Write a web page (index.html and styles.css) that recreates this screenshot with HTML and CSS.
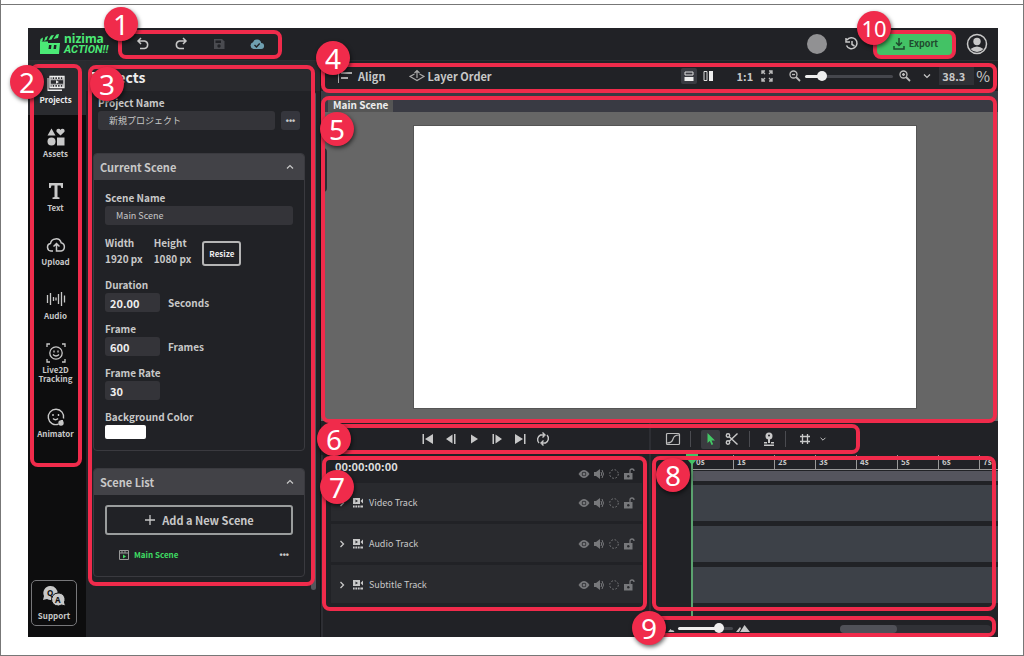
FILE: index.html
```html
<!DOCTYPE html>
<html lang="en">
<head>
    <meta charset="utf-8">
    <title>nizima ACTION!! - Screen Guide</title>
    <link rel="stylesheet" href="styles.css">
</head>
<body>
    <!-- shared icons -->
    <svg class="sprite" width="0" height="0">
        <symbol id="eye" viewBox="0 0 12 12"><path d="M.5 6q5.500-8 11 0q-5.500 8-11 0z" fill="currentColor"/><circle cx="6" cy="6" r="2.300" fill="#292a2e"/><circle cx="6" cy="6" r="1.500" fill="currentColor"/></symbol>
        <symbol id="speaker" viewBox="0 0 12 12"><path d="M1 4h2l4-3v10l-4-3H1z" fill="currentColor"/><path d="M8 4q1.500 2 0 4M9 2q3 4 0 8" fill="none" stroke="currentColor"/></symbol>
        <symbol id="ring" viewBox="0 0 12 12"><circle cx="6" cy="6" r="4.300" fill="none" stroke="currentColor" stroke-dasharray="1.7 1.700"/></symbol>
        <symbol id="lock" viewBox="0 0 12 12"><path d="M1 5h8.500v6.500H1z" fill="currentColor"/><path d="M7 5V3q0-2 2-2t2 2" fill="none" stroke="currentColor" stroke-width="1.300"/><circle cx="5.300" cy="8.300" r="1.200" fill="#292a2e"/></symbol>
        <symbol id="film" viewBox="0 0 12 12"><path d="M1 1h7v6H1z" fill="currentColor"/><path d="M3.500 2.500v3L6 4z" fill="#292a2e"/><path d="M8.500 4l2.500-2.500v5zM1 8.500h10v2H1z" fill="currentColor"/><path d="M3 8v3M5.500 8v3M8 8v3" stroke="#292a2e" stroke-width=".7"/></symbol>
        <symbol id="up" viewBox="0 0 10 10"><path d="M2 6.500l3-3 3 3" fill="none" stroke="currentColor" stroke-width="1.200"/></symbol>
        <symbol id="down" viewBox="0 0 10 10"><path d="M2 3.500l3 3 3-3" fill="none" stroke="currentColor" stroke-width="1.200"/></symbol>
        <symbol id="right" viewBox="0 0 10 10"><path d="M3.500 2l3 3-3 3" fill="none" stroke="currentColor" stroke-width="1.300"/></symbol>
    </svg>

    <div class="sheet">
    <div class="app">
        <header class="topbar">
            <a href="#" class="logo">
                <svg width="22" height="22" viewBox="0 0 22 22" fill="#4bea76"><path d="M1 10h20l-1 11H1z"/><path d="M1 9l.5-3L4 4.500 3.500 8zM5 8l1.500-4L9 3 7.500 7zM9.500 7L12 2.500l3-.5-2.500 4.500zM14.500 6l3-4.500L20 1l-1 4zM1 8.500h8V10H1z"/><path d="M10 12h2.500l-.5 4H9.500zM15 12h2.500l-.5 4H14.500z" fill="#212226"/></svg>
                <span class="logo-text"><b>nizima</b><i>ACTION!!</i></span>
            </a>
            <div class="history">
                <button aria-label="Undo"><svg width="16" height="16" viewBox="0 0 16 16" fill="none" stroke="#c8c8c8" stroke-width="1.500"><path d="M6 2L3 5l3 3M3 5h6.500a3.800 3.800 0 0 1 0 7.500H5"/></svg></button>
                <button aria-label="Redo"><svg width="16" height="16" viewBox="0 0 16 16" fill="none" stroke="#c8c8c8" stroke-width="1.500"><path d="M10 2l3 3-3 3M13 5H6.500a3.800 3.800 0 0 0 0 7.500H11"/></svg></button>
                <button aria-label="Save" disabled><svg width="16" height="16" viewBox="0 0 16 16"><path d="M3 3h8l2.500 2.500V13H3z" fill="#4a4b50"/><path d="M4.500 4.500H10V7H4.500z" fill="#212226"/><circle cx="8" cy="10" r="1.700" fill="#212226"/></svg></button>
                <button aria-label="Cloud saved"><svg width="16" height="16" viewBox="0 0 16 16"><path d="M4.500 13a3.500 3.500 0 0 1-.5-6.800 4.300 4.300 0 0 1 8.200.8A3 3 0 0 1 12 13z" fill="#6f9fb0"/><path d="M5.500 9l2 2 3.200-3.500" fill="none" stroke="#212226" stroke-width="1.400"/></svg></button>
                <div class="box box-1"><span class="num">1</span></div>
            </div>
            <div class="account">
                <span class="status-dot"></span>
                <button class="versions" aria-label="Version history"><svg width="16" height="16" viewBox="0 0 16 16" fill="none" stroke="#c8c8c8" stroke-width="1.500"><path d="M3 4a5.500 5.500 0 1 1-.5 5.500M2 2v4h4M8 5v3.500l2.500 1.500"/></svg></button>
                <div class="export-wrap">
                    <button class="export"><svg width="12" height="12" viewBox="0 0 12 12" fill="none" stroke="#1f4a2e" stroke-width="1.500"><path d="M6 0v7M3 4.500l3 3 3-3M1 8v3h10V8"/></svg>Export</button>
                    <div class="box box-10"><span class="num small">10</span></div>
                </div>
                <button aria-label="Account"><svg width="22" height="22" viewBox="0 0 22 22"><circle cx="11" cy="11" r="9.500" fill="none" stroke="#c8c8c8" stroke-width="1.500"/><circle cx="11" cy="8.500" r="3.700" fill="#c8c8c8"/><path d="M4.500 16q6.500-5 13 0a8.500 8.500 0 0 1-13 0z" fill="#c8c8c8"/></svg></button>
            </div>
        </header>

        <div class="body">
            <nav class="rail">
                <a href="#" class="tab active"><svg viewBox="0 0 20 20"><path d="M4 3.500h14v11H4z" fill="none" stroke="currentColor" stroke-width="1.300"/><path d="M4.500 6.700h13M4.500 11.300h13" stroke="currentColor" stroke-width=".8"/><path d="M5.500 5h12M5.500 13h12" stroke="currentColor" stroke-width="1.800" stroke-dasharray="1.200 1.500"/><path d="M10 7.300l3 1.700-3 1.700zM1.500 5h1v11.500H16V18H1.500z" fill="currentColor"/></svg>Projects</a>
                <a href="#" class="tab"><svg viewBox="0 0 20 20" fill="currentColor"><path d="M5.500 1.500l4 7h-8z"/><path d="M14.500 8.500l-4-3.700q-.5-3 2-3 1.500 0 2 1.200.5-1.200 2-1.200 2.500 0 2 3z"/><circle cx="5.500" cy="14.500" r="4"/><path d="M11 10.500h7.500v8H11z"/></svg>Assets</a>
                <a href="#" class="tab"><svg viewBox="0 0 20 20" fill="currentColor"><path d="M3 2h14v5h-1.700l-.8-2.500h-3v11.500l2 .6V18h-7v-1.400l2-.6V4.500h-3L4.700 7H3z"/></svg>Text</a>
                <a href="#" class="tab"><svg viewBox="0 0 20 20" fill="none" stroke="currentColor" stroke-width="1.500"><path d="M7 16H5a3.800 3.800 0 0 1-.5-7.500 5.500 5.500 0 0 1 10.700-.7A4.200 4.200 0 0 1 15 16h-4.500V9M7.500 11.500l3-3 3 3"/></svg>Upload</a>
                <a href="#" class="tab"><svg viewBox="0 0 20 20" fill="none" stroke="currentColor" stroke-width="1.300"><path d="M1.500 6v8M4.500 4v12M7.500 8v4M10 8.500v3M12.500 5v10M15.500 3v14M18.500 6.500v7"/></svg>Audio</a>
                <a href="#" class="tab tall"><svg viewBox="0 0 20 20" fill="none" stroke="currentColor" stroke-width="1.300"><circle cx="10" cy="10" r="6.200"/><path d="M1 4V1h3M16 1h3v3M19 16v3h-3M4 19H1v-3M7 11.500q3 3 6 0M8 7.500v2M12 7.500v2"/></svg>Live2D<br>Tracking</a>
                <a href="#" class="tab"><svg viewBox="0 0 20 20" fill="none" stroke="currentColor" stroke-width="1.400"><path d="M17.500 11.500a7.700 7.700 0 1 0-5 5.700M7 11.500q2.500 2.500 5 0M7 7v2M12.500 7v2"/><path d="M16 13v3" stroke-width="2"/><circle cx="15" cy="16" r="2" fill="currentColor"/></svg>Animator</a>
                <button class="support"><svg width="24" height="22" viewBox="0 0 24 22"><path d="M8 1a7 7 0 1 1-3 13l-4 1 1-4A7 7 0 0 1 8 1z" fill="#c8c8c8"/><path d="M16 8a6.500 6.500 0 0 1 6.500 9l1 4-4-1A6.500 6.500 0 1 1 16 8z" fill="#c8c8c8" stroke="#0d0d0e"/><text x="5" y="11" class="qa">Q</text><text x="13" y="18" class="qa">A</text></svg>Support</button>
                <div class="box box-2"><span class="num">2</span></div>
            </nav>

            <aside class="panel">
                <h1>Projects</h1>
                <div class="project">
                    <label for="projectName">Project Name</label>
                    <div class="project-row">
                        <input type="text" id="projectName" value="新規プロジェクト">
                        <button class="more" aria-label="Project menu">•••</button>
                    </div>
                </div>

                <section class="card scene">
                    <h2>Current Scene <svg width="10" height="10"><use href="#up"/></svg></h2>
                    <div class="card-body">
                        <label for="sceneName">Scene Name</label>
                        <input type="text" id="sceneName" value="Main Scene">
                        <div class="size">
                            <div>Width<br>1920 px</div>
                            <div>Height<br>1080 px</div>
                            <button class="resize">Resize</button>
                        </div>
                        <label for="duration">Duration</label>
                        <div class="value"><input type="text" id="duration" value="20.00"> Seconds</div>
                        <label for="frame">Frame</label>
                        <div class="value"><input type="text" id="frame" value="600"> Frames</div>
                        <label for="rate">Frame Rate</label>
                        <div class="value"><input type="text" id="rate" value="30"></div>
                        <label for="bgColor">Background Color</label>
                        <input type="color" id="bgColor" value="#ffffff">
                    </div>
                </section>

                <section class="card list">
                    <h2>Scene List <svg width="10" height="10"><use href="#up"/></svg></h2>
                    <div class="card-body">
                        <button class="add"><svg width="12" height="12" viewBox="0 0 12 12" stroke="#c8c8c8" stroke-width="1.300"><path d="M6 1v10M1 6h10"/></svg>Add a New Scene</button>
                        <div class="scene-item">
                            <svg width="10" height="10" viewBox="0 0 10 10"><path d="M.5.5h9v9h-9zM.5 3h9M3 .5V3M6 .5V3" fill="none" stroke="#999"/><path d="M4 4.500v4l3-2z" fill="#3fdc63"/></svg>
                            <a href="#">Main Scene</a>
                            <button aria-label="Scene menu">•••</button>
                        </div>
                    </div>
                </section>
                <div class="scrollbar"></div>
                <div class="box box-3"><span class="num">3</span></div>
            </aside>

            <main class="main">
                <div class="toolbar">
                    <button class="tool align"><svg width="16" height="14" viewBox="0 0 16 14" stroke="#aaa" fill="none"><path d="M1.500 0v14"/><path d="M4 4h11M4 9h7" stroke-width="2"/></svg>Align</button>
                    <button class="tool"><svg width="16" height="14" viewBox="0 0 16 14" stroke="#aaa" fill="none" stroke-width="1.200"><path d="M5.500 5L1 7.500 8 11.500l7-4L10.500 5M8 9V2M5.500 4L8 1.500 10.500 4"/></svg>Layer Order</button>
                    <div class="view">
                        <button class="split on" aria-label="Split rows"><svg width="10" height="10" viewBox="0 0 10 10"><path d="M1 1h8v3H1z" fill="none" stroke="#ddd"/><path d="M.5 6h9v4h-9z" fill="#eee"/></svg></button>
                        <button class="split" aria-label="Split columns"><svg width="10" height="10" viewBox="0 0 10 10"><path d="M1 .5h3v9H1z" fill="none" stroke="#ddd"/><path d="M6 0h4v10H6z" fill="#eee"/></svg></button>
                        <button class="ratio">1:1</button>
                        <button class="fit" aria-label="Fit"><svg width="12" height="12" viewBox="0 0 12 12" fill="none" stroke="#bbb" stroke-width="1.400"><path d="M1 4V1h3M8 1h3v3M11 8v3H8M4 11H1V8M1 1l3 3M11 1L8 4M11 11L8 8M1 11l3-3"/></svg></button>
                        <svg width="12" height="12" viewBox="0 0 12 12" fill="none" stroke="#bbb" stroke-width="1.300"><circle cx="4.500" cy="4.500" r="3.500"/><path d="M7 7l4 4" stroke-width="1.800"/><path d="M3 4.500h3"/></svg>
                        <input type="range" class="zoom" min="0" max="100" value="15" aria-label="Zoom">
                        <svg width="12" height="12" viewBox="0 0 12 12" fill="none" stroke="#bbb" stroke-width="1.300"><circle cx="4.500" cy="4.500" r="3.500"/><path d="M7 7l4 4" stroke-width="1.800"/><path d="M3 4.500h3M4.500 3v3"/></svg>
                        <button class="zoom-menu" aria-label="Zoom levels"><svg width="10" height="10"><use href="#down"/></svg></button>
                        <input type="text" class="percent" id="zoomValue" value="38.3">
                        <label for="zoomValue">%</label>
                    </div>
                    <div class="box box-4"><span class="num">4</span></div>
                </div>

                <div class="preview">
                    <div class="scene-tabs"><a href="#">Main Scene</a></div>
                    <div class="stage"><div class="canvas"></div></div>
                    <div class="handle"></div>
                    <div class="box box-5"><span class="num">5</span></div>
                </div>

                <div class="player">
                    <div class="transport">
                        <button aria-label="Go to start"><svg viewBox="0 0 14 14"><path d="M1.500 2H3v10H1.500zM12 2v10L4 7z"/></svg></button>
                        <button aria-label="Previous frame"><svg viewBox="0 0 14 14"><path d="M8.500 2.500v9L2 7zM10 2h1.500v10H10z"/></svg></button>
                        <button aria-label="Play"><svg viewBox="0 0 14 14"><path d="M4 2.500v9L11 7z"/></svg></button>
                        <button aria-label="Next frame"><svg viewBox="0 0 14 14"><path d="M2.500 2H4v10H2.500zM5.500 2.500v9L12 7z"/></svg></button>
                        <button aria-label="Go to end"><svg viewBox="0 0 14 14"><path d="M11 2h1.500v10H11zM2 2v10l8-5z"/></svg></button>
                        <button class="loop" aria-label="Loop"><svg viewBox="0 0 14 14"><path d="M3 11A5 5 0 0 1 4.500 3H8M6.500.5L9 3 6.500 5.500M11 3a5 5 0 0 1-1.500 8H6M7.500 8.500L5 11l2.500 2.500"/></svg></button>
                    </div>
                    <div class="edit">
                        <button aria-label="Graph editor"><svg width="16" height="14" viewBox="0 0 16 14" fill="none" stroke="#bbb" stroke-width="1.200"><rect x="1.500" y="1.500" width="13" height="11" rx="1"/><path d="M2 11q5 0 6-4t6-4"/></svg></button>
                        <span class="sep"></span>
                        <button class="on" aria-label="Select"><svg width="10" height="14" viewBox="0 0 10 14" fill="#43c765"><path d="M1.500 1v10l2.300-2 1.700 4 1.700-.8L5.500 8.500H9z"/></svg></button>
                        <button class="cut" aria-label="Cut"><svg width="14" height="14" viewBox="0 0 14 14" fill="none" stroke="#c8c8c8" stroke-width="1.400"><path d="M4 4.500l8.500 8M4 9.500l8.500-8"/><circle cx="3" cy="3.500" r="1.700"/><circle cx="3" cy="10.500" r="1.700"/></svg></button>
                        <span class="sep"></span>
                        <button aria-label="Marker"><svg width="12" height="14" viewBox="0 0 12 14" fill="#c8c8c8"><circle cx="6" cy="4" r="3.500"/><path d="M5 7h2v4H5zM1 10h3v1.500H1zM8 10h3v1.500H8zM1 12.500h10V14H1z"/><circle cx="6" cy="3.500" r="1" fill="#212226"/></svg></button>
                        <span class="sep"></span>
                        <button aria-label="Snap to grid"><svg width="12" height="12" viewBox="0 0 12 12" stroke="#c8c8c8" stroke-width="1.300"><path d="M3.500 1v10M8.500 1v10M1 3.500h10M1 8.500h10"/></svg></button>
                        <button class="grid-menu" aria-label="Grid options"><svg width="8" height="8" viewBox="0 0 10 10"><use href="#down"/></svg></button>
                    </div>
                    <div class="box box-6"><span class="num">6</span></div>
                </div>

                <div class="timeline">
                    <div class="tracks">
                        <div class="track-head">
                            <time>00:00:00:00</time>
                            <div class="flags"><svg><use href="#eye"/></svg><svg><use href="#speaker"/></svg><svg><use href="#ring"/></svg><svg><use href="#lock"/></svg></div>
                        </div>
                        <div class="track"><svg width="10" height="10"><use href="#right"/></svg><svg width="12" height="12"><use href="#film"/></svg>Video Track
                            <div class="flags"><svg><use href="#eye"/></svg><svg><use href="#speaker"/></svg><svg><use href="#ring"/></svg><svg><use href="#lock"/></svg></div>
                        </div>
                        <div class="track"><svg width="10" height="10"><use href="#right"/></svg><svg width="12" height="12"><use href="#film"/></svg>Audio Track
                            <div class="flags"><svg><use href="#eye"/></svg><svg><use href="#speaker"/></svg><svg><use href="#ring"/></svg><svg><use href="#lock"/></svg></div>
                        </div>
                        <div class="track"><svg width="10" height="10"><use href="#right"/></svg><svg width="12" height="12"><use href="#film"/></svg>Subtitle Track
                            <div class="flags"><svg><use href="#eye"/></svg><svg><use href="#speaker"/></svg><svg><use href="#ring"/></svg><svg><use href="#lock"/></svg></div>
                        </div>
                        <div class="box box-7"><span class="num">7</span></div>
                    </div>
                    <div class="lanes">
                        <div class="ruler"><span>0s</span><span>1s</span><span>2s</span><span>3s</span><span>4s</span><span>5s</span><span>6s</span><span>7s</span></div>
                        <div class="range"></div>
                        <div class="lane"></div>
                        <div class="lane"></div>
                        <div class="lane"></div>
                        <div class="playhead"></div>
                        <div class="box box-8"><span class="num">8</span></div>
                    </div>
                </div>

                <div class="footer">
                    <div class="scale">
                        <svg width="8" height="8" viewBox="0 0 8 8" fill="#c8c8c8"><path d="M1 7l2.500-3L5 5.500 6 5l1.500 2z"/></svg>
                        <input type="range" class="scale-range" min="0" max="100" value="79" aria-label="Timeline scale">
                        <svg width="14" height="8" viewBox="0 0 14 8" fill="#c8c8c8"><path d="M4 7l4.500-7L14 7zM0 7l4-5 1 1.200L3 7z"/></svg>
                        <div class="hscroll"><div></div></div>
                        <div class="box box-9"><span class="num">9</span></div>
                    </div>
                </div>
            </main>
        </div>
    </div>
    </div>
</body>
</html>
```
FILE: styles.css
```css
* {
    box-sizing: border-box;
}
body {
    margin: 0;
    background: #fff;
    color: #c8c8c8;
    font-family: "Noto Sans CJK JP", "Noto Sans", sans-serif;
    font-size: 11px;
    line-height: 16px;
    font-weight: bold;
}
button, input {
    font: inherit;
    color: inherit;
    border: 0;
    padding: 0;
    margin: 0;
    background: none;
}
button {
    display: flex;
    align-items: center;
    justify-content: center;
}
a {
    color: inherit;
    text-decoration: none;
}
svg {
    display: block;
    flex: none;
}
.sprite {
    position: absolute;
}

/* page frame */
.sheet {
    display: flex;
    min-height: 100vh;
    border: 1px solid #777;
    border-top: 0;
    padding: 28px 25px 18px 27px;
    background: linear-gradient(#777, #777) 0 4px / 100% 1px no-repeat;
}
.app {
    flex: 1;
    min-width: 0;
    display: flex;
    flex-direction: column;
    background: #212226;
}
.body {
    flex: 1;
    display: flex;
}

/* numbered callouts */
.box {
    position: absolute;
    z-index: 5;
    border: 4px solid #f02b4b;
    border-radius: 8px;
    pointer-events: none;
}
.num {
    position: absolute;
    width: 34px;
    height: 34px;
    border-radius: 50%;
    background: #f02b4b;
    color: #fff;
    font: 28px/34px "Noto Sans", sans-serif;
    text-align: center;
    box-shadow: 1px 2px 4px rgba(0, 0, 0, .6);
}
.num.small {
    font-size: 22px;
}
.box-1 { inset: 2px 0 1px 0; }
.box-1 .num { left: -18px; top: -27px; }
.box-2 { inset: 3px 4px auto 2px; height: 403px; }
.box-2 .num { left: -24px; top: -3px; }
.box-3 { inset: 4px 5px auto 2px; height: 521px; }
.box-3 .num { left: -2px; top: -2px; }
.box-4 { inset: 2px 1px -2px 0; }
.box-4 .num { left: -9px; top: -26px; }
.box-5 { inset: 5px 1px -2px 0; }
.box-5 .num { left: -5px; top: 12px; }
.box-6 { inset: 3px 138px 1px 0; }
.box-6 .num { left: -8px; top: -6px; }
.box-7 { inset: 1px 2px 5px -1px; }
.box-7 .num { left: -6px; top: 10px; }
.box-8 { inset: 1px 2px 5px 1px; }
.box-8 .num { left: 0; top: -2px; }
.box-9 { inset: 0 2px 0 0; }
.box-9 .num { left: -19px; top: -9px; }
.box-10 { inset: -4px; }
.box-10 .num { left: -20px; top: -23px; }

/* top bar */
.topbar {
    display: flex;
    height: 33px;
    border-bottom: 1px solid #2d2e33;
}
.logo {
    display: flex;
    align-items: center;
    gap: 3px;
    width: 90px;
    padding-left: 11px;
    color: #4bea76;
}
.logo-text b, .logo-text i {
    display: block;
    font: bold 12px/10px "Noto Sans", sans-serif;
}
.logo-text i {
    font: italic bold 11px/11px Roboto, sans-serif;
}
.history {
    position: relative;
    display: flex;
    gap: 22px;
    width: 164px;
    padding-left: 17px;
}
.account {
    display: flex;
    align-items: center;
    margin-left: auto;
    padding-right: 10px;
}
.status-dot {
    width: 20px;
    height: 20px;
    border-radius: 50%;
    background: #919193;
}
.versions {
    margin: 0 17px 0 17px;
}
.export-wrap {
    position: relative;
    margin: 0 14px 0 0;
}
.export {
    gap: 4px;
    width: 75px;
    height: 21px;
    background: #43c265;
    color: #1f4a2e;
    font-size: 9px;
    padding-left: 2px;
}

/* left rail */
.rail {
    position: relative;
    display: flex;
    flex-direction: column;
    width: 58px;
    background: #0d0d0e;
}
.tab {
    min-height: 54px;
    padding: 12px 3px 6px 0;
    font-size: 8px;
    line-height: 9px;
    text-align: center;
}
.tab svg {
    width: 20px;
    height: 20px;
    margin: 0 auto 2px;
}
.tab.active {
    background: #2a2b2f;
    color: #eee;
}
.tab.tall {
    min-height: 64px;
}
.support {
    flex-direction: column;
    gap: 4px;
    width: 46px;
    height: 46px;
    margin: auto 0 11px 3px;
    border: 1px solid #77777a;
    border-radius: 5px;
    font-size: 8px;
    line-height: 10px;
}
.qa {
    font: bold 8px "Noto Sans", sans-serif;
    fill: #0d0d0e;
}

/* project panel */
.panel {
    position: relative;
    width: 235px;
    border-right: 1px solid #141518;
    font-size: 10px;
}
.panel h1 {
    margin: 0;
    height: 30px;
    padding-left: 3px;
    background: #292a2e;
    color: #eee;
    font-size: 14px;
    line-height: 32px;
}
.panel label {
    display: block;
}
.panel input[type="text"] {
    height: 19px;
    background: #343439;
    border-radius: 3px;
}
.project {
    padding: 4px 20px 0 12px;
}
.project-row {
    display: flex;
    gap: 6px;
}
#projectName, #sceneName {
    flex: 1;
    min-width: 0;
    padding-left: 11px;
    font-size: 9px;
    font-weight: normal;
}
.more, .scene-item button {
    font: bold 9px "Liberation Sans", sans-serif;
}
.more {
    width: 19px;
    height: 19px;
    border-radius: 3px;
    background: #35363d;
}
.card {
    margin: 23px 15px 0 7px;
    border: 1px solid #3a3a3f;
    border-radius: 4px;
    overflow: hidden;
}
.card.list {
    margin-top: 17px;
}
.card h2 {
    display: flex;
    align-items: center;
    justify-content: space-between;
    margin: 0;
    height: 26px;
    padding: 0 9px 0 6px;
    background: #424247;
    font-size: 11px;
}
.card-body {
    padding: 10px 11px 11px;
}
#sceneName {
    display: block;
    width: 100%;
}
.size {
    display: flex;
    gap: 11px;
    margin: 10px 0;
}
.resize {
    width: 39px;
    height: 25px;
    margin-top: 6px;
    border: 2px solid #b5b5b5;
    border-radius: 3px;
    color: #eee;
    font-size: 8px;
}
.value {
    display: flex;
    align-items: center;
    gap: 8px;
    margin-bottom: 9px;
}
.value input {
    width: 55px;
    padding-left: 5px;
    color: #eee;
    font-size: 11px;
}
#bgColor {
    display: block;
    width: 41px;
    height: 14px;
}
#bgColor::-webkit-color-swatch-wrapper {
    padding: 0;
}
#bgColor::-webkit-color-swatch {
    border: 0;
    border-radius: 2px;
}
.add {
    gap: 6px;
    width: 100%;
    height: 30px;
    border: 2px solid #9a9d9d;
    border-radius: 3px;
    font-size: 11px;
}
.scene-item {
    display: flex;
    align-items: center;
    gap: 5px;
    padding: 12px 4px 2px 14px;
    font-size: 8px;
}
.scene-item a {
    color: #3fdc63;
}
.scene-item button {
    margin-left: auto;
}
.scrollbar {
    position: absolute;
    top: 31px;
    right: 4px;
    width: 5px;
    height: 498px;
    border-radius: 3px;
    background: #55565c;
}

/* main column */
.main {
    flex: 1;
    min-width: 0;
    display: flex;
    flex-direction: column;
}
.toolbar {
    position: relative;
    z-index: 1;
    display: flex;
    align-items: center;
    height: 30px;
    padding-left: 16px;
}
.tool {
    gap: 5px;
}
.tool + .tool {
    gap: 2px;
}
.align {
    margin-right: 24px;
}
.view {
    display: flex;
    align-items: center;
    margin-left: auto;
    padding-right: 8px;
}
.split {
    width: 16px;
    height: 16px;
    border-radius: 2px;
    margin-right: 3px;
}
.split.on {
    background: #3a3b42;
}
.ratio {
    margin: 0 8px 0 18px;
}
.fit {
    margin-right: 16px;
}
.zoom {
    width: 88px;
    margin: 0 6px 0 4px;
    --fill: 20%;
}
.zoom-menu {
    margin: 0 7px 0 11px;
}
.percent {
    width: 35px;
    height: 18px;
    padding-left: 3px;
    background: #303136;
}
.view label {
    margin-left: 2px;
    font-size: 15px;
    font-weight: normal;
}
input[type="range"] {
    appearance: none;
    height: 10px;
}
input[type="range"]::-webkit-slider-runnable-track {
    height: 3px;
    border-radius: 2px;
    background: linear-gradient(90deg, #eee var(--fill), #45464c var(--fill));
}
input[type="range"]::-webkit-slider-thumb {
    appearance: none;
    width: 10px;
    height: 10px;
    margin-top: -4px;
    border-radius: 50%;
    background: #eee;
}

/* preview */
.preview {
    position: relative;
    flex: 1;
    display: flex;
    flex-direction: column;
    background: #666;
}
.scene-tabs {
    height: 21px;
    padding: 6px 0 0 7px;
    background: #393a43;
    font-size: 10px;
    line-height: 15px;
}
.scene-tabs a {
    display: inline-block;
    padding: 0 5px;
    background: #555;
    color: #eee;
}
.stage {
    padding: 13px 81px 12px 92px;
}
.canvas {
    aspect-ratio: 16 / 9;
    background: #fff;
    border: 1px solid #555;
}
.handle {
    position: absolute;
    left: 0;
    top: 57px;
    width: 6px;
    height: 44px;
    border-radius: 0 4px 4px 0;
    background: #2c2d33;
}

/* player and editing tools */
.player {
    position: relative;
    z-index: 1;
    display: flex;
    height: 34px;
    padding-top: 2px;
}
.transport {
    display: flex;
    align-items: center;
    justify-content: center;
    gap: 9px;
    width: 330px;
    border-right: 2px solid #2d2e33;
}
.transport svg {
    width: 14px;
    height: 14px;
    fill: #c8c8c8;
}
.transport .loop svg {
    fill: none;
    stroke: #c8c8c8;
    stroke-width: 1.4;
}
.edit {
    display: flex;
    align-items: center;
    padding-left: 14px;
}
.sep {
    width: 1px;
    height: 16px;
    margin: 0 13px 0 10px;
    background: #4a4b50;
}
.edit .sep:nth-of-type(1) {
    margin: 0 10px 0 9px;
}
.cut {
    margin-left: 5px;
}
.grid-menu {
    margin-left: 8px;
}

.edit .on {
    width: 19px;
    height: 19px;
    border-radius: 2px;
    background: #3a3b40;
}

/* timeline */
.timeline {
    display: flex;
    height: 161px;
}
.tracks {
    position: relative;
    width: 330px;
    padding: 0 7px 0 8px;
    border-left: 2px solid #2d2e33;
    border-right: 2px solid #2d2e33;
    font-size: 9px;
    font-weight: normal;
}
.track-head {
    display: flex;
    height: 28px;
    padding: 3px 7px 0 4px;
    font-size: 11px;
    font-weight: bold;
}
time {
    color: #ddd;
}
.track {
    display: flex;
    align-items: center;
    gap: 5px;
    height: 38px;
    margin-bottom: 3px;
    padding: 2px 7px 0 6px;
    background: #292a2e;
}
.flags {
    display: flex;
    gap: 3px;
    margin-left: auto;
    color: #77787b;
}
.track-head .flags {
    margin-top: 10px;
}
.flags svg {
    width: 12px;
    height: 12px;
}
.lanes {
    position: relative;
    flex: 1;
    min-width: 0;
    padding-left: 41px;
}
.ruler {
    display: flex;
    height: 15px;
    overflow: hidden;
    border-bottom: 1px solid #999;
    font-size: 8px;
    line-height: 14px;
}
.ruler span {
    flex: 0 0 41px;
    border-left: 1px solid #999;
    padding-left: 3px;
}
.range {
    height: 10px;
    margin: 1px 0 4px;
    background: #55555e;
}
.lane {
    height: 36px;
    margin-bottom: 5px;
    background: #3d4148;
}
.playhead {
    position: absolute;
    left: 40px;
    top: 0;
    bottom: 0;
    width: 2px;
    background: #5ba36f;
}
.playhead::before {
    content: "";
    position: absolute;
    left: -5px;
    top: -2px;
    width: 12px;
    height: 12px;
    background: #43c265;
    clip-path: polygon(0 0, 100% 0, 100% 40%, 50% 100%, 0 40%);
}

/* bottom bar */
.footer {
    height: 21px;
    padding-left: 324px;
    border-left: 2px solid #2d2e33;
}
.scale {
    position: relative;
    display: flex;
    align-items: center;
    height: 21px;
    padding: 4px 7px 0 20px;
}
.scale-range {
    width: 55px;
    margin: 0 3px;
    --fill: 75%;
}
.hscroll {
    flex: 0 1 151px;
    height: 8px;
    margin-left: auto;
    border-radius: 4px;
    background: #303136;
}
.hscroll div {
    width: 38%;
    height: 8px;
    border-radius: 4px;
    background: #505158;
}
```
